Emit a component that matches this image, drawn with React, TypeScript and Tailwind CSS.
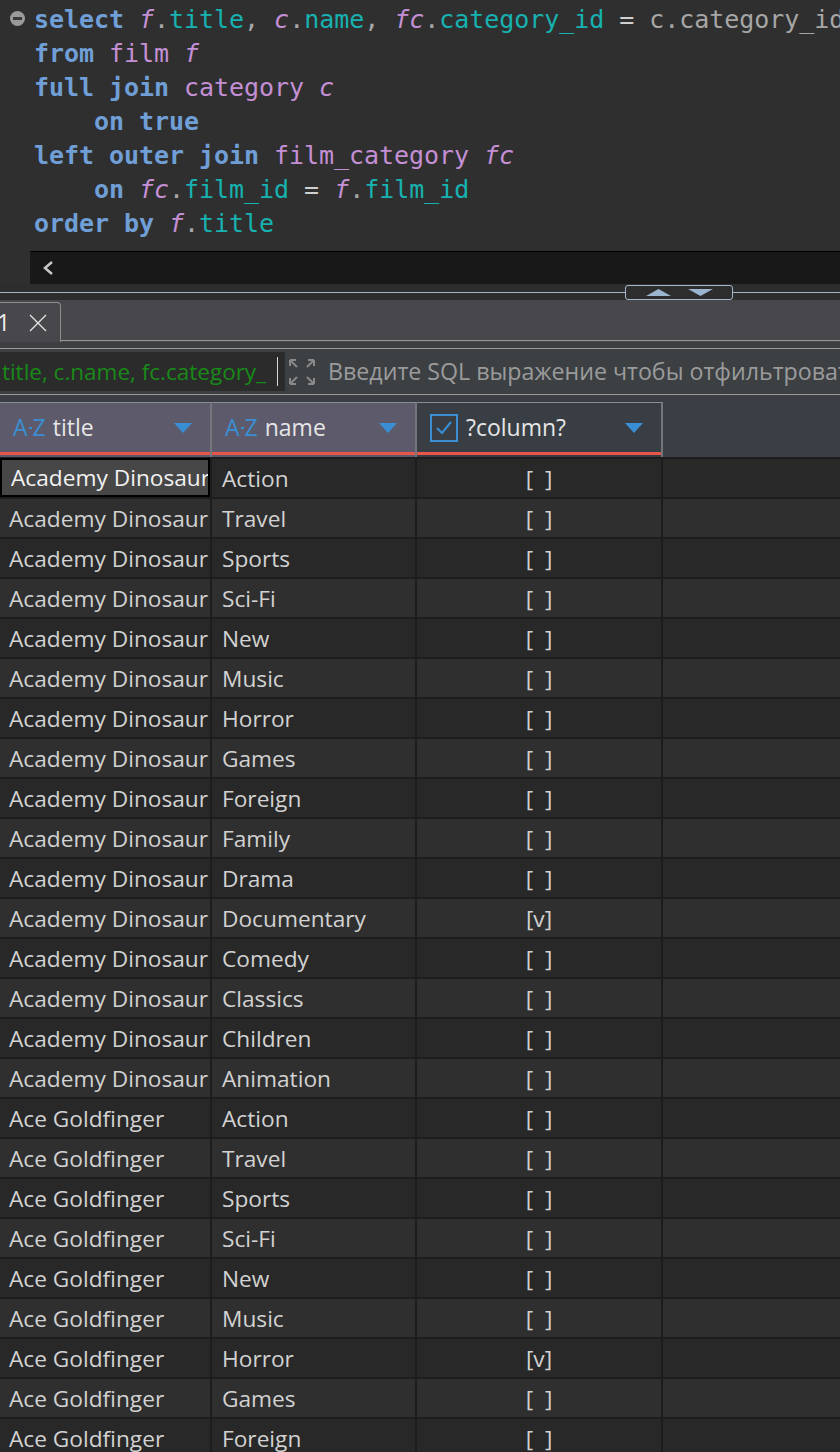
import React from 'react';

const KW = 'text-[#6f9fd6] font-bold';
const ID = 'text-[#c48fd4]';
const AL = 'text-[#c48fd4] italic';
const COL = 'text-[#17b2b0]';
const PUN = 'text-[#a8a8a8]';

const rows: [string, string, boolean][] = [
  ['Academy Dinosaur', 'Action', false],
  ['Academy Dinosaur', 'Travel', false],
  ['Academy Dinosaur', 'Sports', false],
  ['Academy Dinosaur', 'Sci-Fi', false],
  ['Academy Dinosaur', 'New', false],
  ['Academy Dinosaur', 'Music', false],
  ['Academy Dinosaur', 'Horror', false],
  ['Academy Dinosaur', 'Games', false],
  ['Academy Dinosaur', 'Foreign', false],
  ['Academy Dinosaur', 'Family', false],
  ['Academy Dinosaur', 'Drama', false],
  ['Academy Dinosaur', 'Documentary', true],
  ['Academy Dinosaur', 'Comedy', false],
  ['Academy Dinosaur', 'Classics', false],
  ['Academy Dinosaur', 'Children', false],
  ['Academy Dinosaur', 'Animation', false],
  ['Ace Goldfinger', 'Action', false],
  ['Ace Goldfinger', 'Travel', false],
  ['Ace Goldfinger', 'Sports', false],
  ['Ace Goldfinger', 'Sci-Fi', false],
  ['Ace Goldfinger', 'New', false],
  ['Ace Goldfinger', 'Music', false],
  ['Ace Goldfinger', 'Horror', true],
  ['Ace Goldfinger', 'Games', false],
  ['Ace Goldfinger', 'Foreign', false],
];

const AZ = () => (
  <span className="text-[#3a8fd4] text-[23px] mr-[7px] leading-none flex items-center">
    A<span className="inline-block w-[3px] h-[2px] bg-[#3a8fd4] mx-[1px]" />Z
  </span>
);

const Caret = () => (
  <svg width="18" height="10" viewBox="0 0 18 10" className="ml-auto shrink-0">
    <path d="M0 0 L18 0 L9 10 Z" fill="#3a8fd4" />
  </svg>
);

const HeaderCell: React.FC<{ w: string; bg: string; children: React.ReactNode }> = ({ w, bg, children }) => (
  <div className={`${w} ${bg} h-full flex flex-col border-t border-[#8c8c96] border-r-2 border-r-[#75757c]`}>
    <div className="flex-1 flex items-center pl-[13px] pr-[18px]">{children}</div>
    <div className="h-[3px] bg-[#e8564a] mb-[2px]" />
  </div>
);

export default function App() {
  return (
    <div className="w-[840px] h-[1452px] overflow-hidden bg-[#2e2e2e]" style={{ fontFamily: '"Open Sans", "Noto Sans", sans-serif' }}>
      {/* SQL editor */}
      <div className="relative bg-[#2f2f2f] pt-[3px] h-[251px]" style={{ fontFamily: '"DejaVu Sans Mono", "Liberation Mono", monospace' }}>
        <div className="absolute left-[10px] top-[11px] w-[15px] h-[15px] rounded-full bg-[#9a9a9a] flex items-center justify-center">
          <div className="w-[9px] h-[3px] bg-[#3a3a3a]" />
        </div>
        <div className="pl-[34px] text-[25px] leading-[34px] whitespace-pre text-[#c8c8c8] tracking-[-0.05px]">
          <div>
            <span className={KW}>select</span> <span className={AL}>f</span><span className={PUN}>.</span><span className={COL}>title</span><span className={PUN}>,</span>{' '}
            <span className={AL}>c</span><span className={PUN}>.</span><span className={COL}>name</span><span className={PUN}>,</span>{' '}
            <span className={AL}>fc</span><span className={PUN}>.</span><span className={COL}>category_id</span> <span className="text-[#d0d0d0]">=</span>{' '}
            <span className="text-[#a6a6a6]">c.category_id</span>
          </div>
          <div><span className={KW}>from</span> <span className={ID}>film</span> <span className={AL}>f</span></div>
          <div><span className={KW}>full join</span> <span className={ID}>category</span> <span className={AL}>c</span></div>
          <div>    <span className={KW}>on true</span></div>
          <div><span className={KW}>left outer join</span> <span className={ID}>film_category</span> <span className={AL}>fc</span></div>
          <div>
            {'    '}<span className={KW}>on</span> <span className={AL}>fc</span><span className={PUN}>.</span><span className={COL}>film_id</span> <span className="text-[#d0d0d0]">=</span>{' '}
            <span className={AL}>f</span><span className={PUN}>.</span><span className={COL}>film_id</span>
          </div>
          <div><span className={KW}>order by</span> <span className={AL}>f</span><span className={PUN}>.</span><span className={COL}>title</span></div>
        </div>
      </div>
      {/* horizontal scrollbar */}
      <div className="bg-[#2f2f2f] pl-[30px]">
        <div className="h-[33px] bg-[#181818] border-t border-black flex items-center pl-[12px]">
          <svg width="12" height="14" viewBox="0 0 12 14">
            <path d="M10 1 L3 7 L10 13" stroke="#c8c8c8" strokeWidth="2.5" fill="none" />
          </svg>
        </div>
      </div>
      {/* splitter */}
      <div className="relative h-[16px] bg-[#2d2d2d] flex items-center">
        <div className="flex-1 h-px bg-[#a3b7cc]" />
        <div className="w-[108px] h-[15px] border border-[#a3b7cc] rounded-[3px] flex items-center justify-center gap-[17px] bg-[#2d2d2d]">
          <svg width="25" height="7" viewBox="0 0 25 7"><path d="M0 7 L12.5 0 L25 7 Z" fill="#9bb4d0" /></svg>
          <svg width="25" height="7" viewBox="0 0 25 7"><path d="M0 0 L25 0 L12.5 7 Z" fill="#9bb4d0" /></svg>
        </div>
        <div className="w-[107px] h-px bg-[#a3b7cc]" />
      </div>
      {/* tabs */}
      <div className="h-[42px] bg-[#48474c] flex items-end">
        <div className="w-[61px] shrink-0 h-[40px] border-r border-t border-[#8e8e8e] rounded-tr-[4px] flex items-center text-[#f0f0f0] text-[23px] bg-[#48474c]">
          <span className="-ml-[3px]">1</span>
          <svg width="18" height="18" viewBox="0 0 18 18" className="ml-[19px]">
            <path d="M1 1 L17 17 M17 1 L1 17" stroke="#e8e8e8" strokeWidth="1.2" />
          </svg>
        </div>
        <div className="flex-1 h-px bg-[#959595] mb-px" />
      </div>
      <div className="h-[7px] bg-[#3c4043] border-b border-[#9a9a9a]" />
      {/* filter */}
      <div className="h-[46px] bg-[#3c4043] border-b border-[#9a9a9a] flex items-center overflow-hidden">
        <div className="w-[285px] shrink-0 h-[39px] bg-[#2b2b2b] flex items-center overflow-hidden relative">
          <span className="text-[#188a18] text-[22.5px] whitespace-nowrap -ml-[4px]">.title, c.name, fc.category_</span>
          <div className="absolute left-[277px] top-[5px] w-px h-[29px] bg-[#d8d8d8]" />
        </div>
        <svg width="30" height="30" viewBox="0 0 30 30" className="ml-[2px] shrink-0">
          <g stroke="#8a8a8a" strokeWidth="2" fill="none">
            <path d="M3 3 L10 10 M3 3 L3 9 M3 3 L9 3" />
            <path d="M27 3 L20 10 M27 3 L27 9 M27 3 L21 3" />
            <path d="M3 27 L10 20 M3 27 L3 21 M3 27 L9 27" />
            <path d="M27 27 L20 20 M27 27 L27 21 M27 27 L21 27" />
          </g>
        </svg>
        <span className="ml-[11px] text-[#9b9b9b] text-[23.2px] whitespace-nowrap shrink-0">Введите SQL выражение чтобы отфильтровать результаты</span>
      </div>
      <div className="h-[7px] bg-[#3a3e44]" />
      {/* header */}
      <div className="h-[55px] bg-[#3a3f45] flex text-[#e6e6e6] text-[23px]">
        <HeaderCell w="w-[212px]" bg="bg-[#5c5a6b]">
          <AZ />
          <span>title</span>
          <Caret />
        </HeaderCell>
        <HeaderCell w="w-[205px]" bg="bg-[#5c5a6b]">
          <AZ />
          <span>name</span>
          <Caret />
        </HeaderCell>
        <HeaderCell w="w-[246px]" bg="bg-[#393e45]">
          <svg width="28" height="28" viewBox="0 0 28 28" className="mr-[8px] shrink-0">
            <rect x="1" y="1" width="26" height="26" fill="none" stroke="#3a8fd4" strokeWidth="2" />
            <path d="M7 14 L12 19 L21 8" fill="none" stroke="#3a8fd4" strokeWidth="2" />
          </svg>
          <span>?column?</span>
          <Caret />
        </HeaderCell>
      </div>
      {/* rows */}
      <div className="bg-[#1d1d1d] pt-[2px]">
        {rows.map(([title, name, v], i) => {
          const bg = i % 2 === 0 ? 'bg-[#282828]' : 'bg-[#2f2f2f]';
          return (
            <div key={i} className="h-[40px] flex gap-[2px] pb-[2px] text-[#d2d2d2] text-[22.7px]">
              <div
                className={`w-[210px] flex items-center pl-[9px] pt-[2px] overflow-hidden whitespace-nowrap ${
                  i === 0 ? 'bg-[#474747] border-2 border-black -mt-[1px] pl-[8px] text-[#f2f2f2]' : bg
                }`}
              >
                {title}
              </div>
              <div className={`w-[203px] flex items-center pl-[10px] pt-[2px] whitespace-nowrap ${bg}`}>{name}</div>
              <div className={`w-[244px] flex items-center justify-center pt-[2px] whitespace-pre ${bg}`}>{v ? '[v]' : '[  ]'}</div>
              <div className={`flex-1 ${bg}`} />
            </div>
          );
        })}
      </div>
    </div>
  );
}
